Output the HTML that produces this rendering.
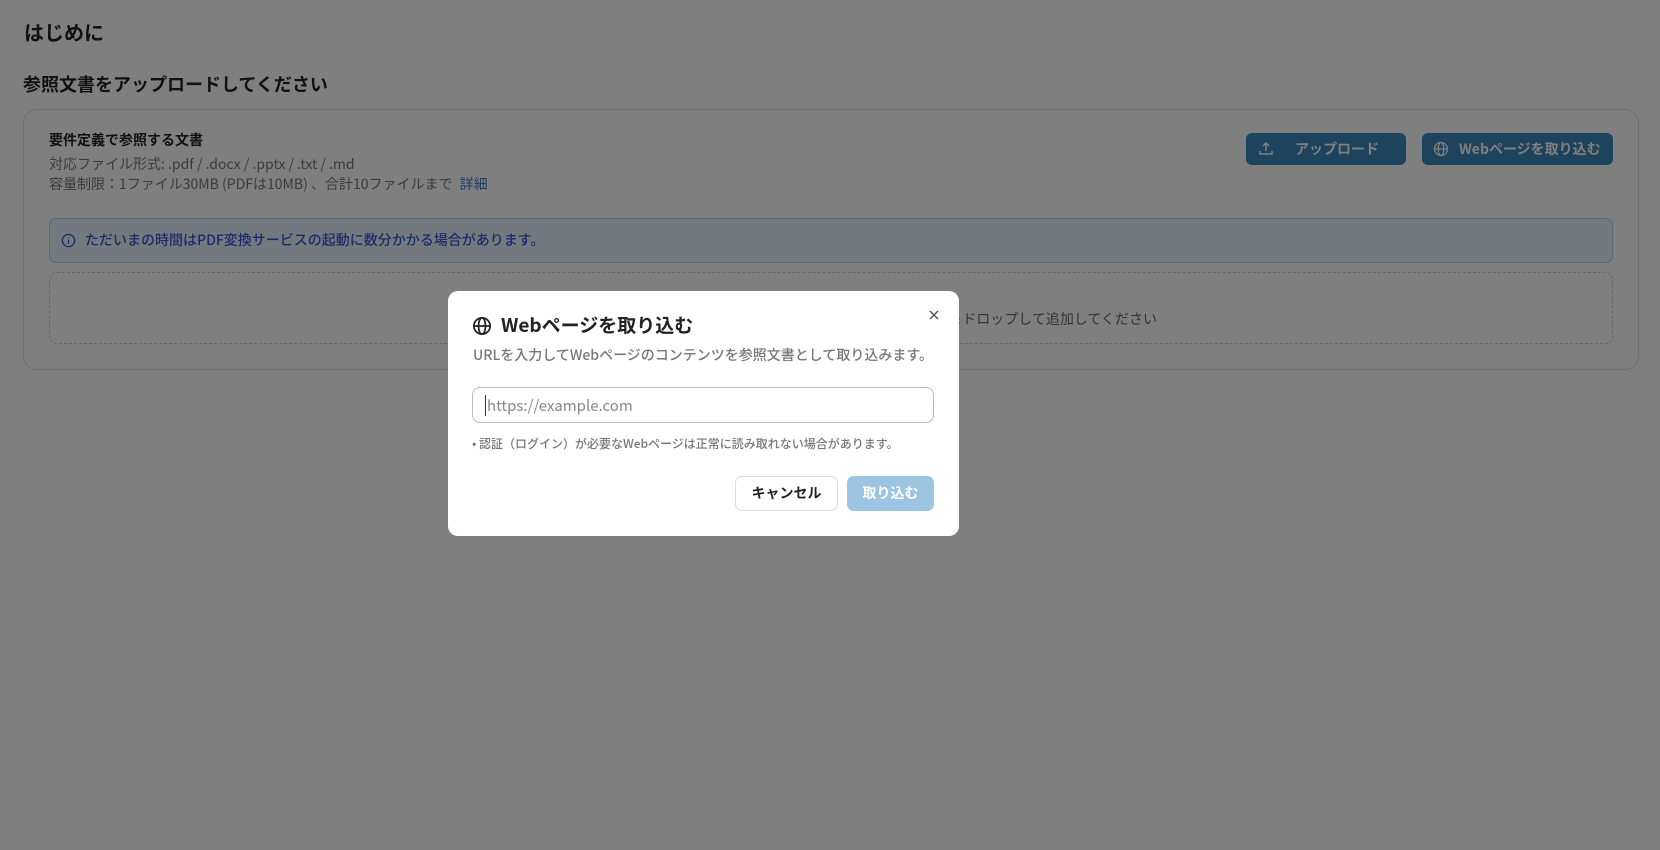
<!DOCTYPE html>
<html><head><meta charset="utf-8"><style>
*{box-sizing:border-box;margin:0;padding:0}
body{width:1660px;height:850px;overflow:hidden;background:#fff;font-family:"Noto Sans CJK JP","Liberation Sans",sans-serif;color:#222;position:relative}
.a{position:absolute;white-space:nowrap;line-height:1.4}
.card{position:absolute;left:23px;top:109px;width:1616px;height:261px;border:1px solid #ddd;border-radius:14px}
.btn{position:absolute;top:133px;height:32px;background:#3a86bb;color:#fff;border-radius:6px;font-size:14px;font-weight:bold;display:flex;align-items:center}
.ov{position:absolute;inset:0;background:rgba(0,0,0,.5)}
.modal{position:absolute;left:448px;top:291px;width:511px;height:245px;background:#fff;border-radius:10px}
</style></head><body>
<div class="a" style="left:24px;top:18px;font-size:20px;font-weight:bold">はじめに</div>
<div class="a" style="left:23px;top:72px;font-size:18px;font-weight:bold">参照文書をアップロードしてください</div>
<div class="card"></div>
<div class="a" style="left:49px;top:131px;font-size:14px;font-weight:bold">要件定義で参照する文書</div>
<div class="a" style="left:49px;top:155px;font-size:14px;color:#777">対応ファイル形式: .pdf / .docx / .pptx / .txt / .md</div>
<div class="a" style="left:49px;top:175px;font-size:14px;color:#777">容量制限：1ファイル30MB (PDFは10MB) 、合計10ファイルまで <span style="color:#3d7cc0;margin-left:4px">詳細</span></div>
<div class="btn" style="left:1246px;width:160px"><svg style="margin-left:12px" width="16" height="16" viewBox="0 0 16 16" fill="none" stroke="#fff" stroke-width="1.5"><path d="M8 10V2M5 5l3-3 3 3M2 10v3h12v-3"/></svg><span style="margin-left:21px">アップロード</span></div>
<div class="btn" style="left:1422px;width:191px"><svg style="margin-left:11px" width="16" height="16" viewBox="0 0 16 16" fill="none" stroke="#fff" stroke-width="1.3"><circle cx="8" cy="8" r="6.5"/><ellipse cx="8" cy="8" rx="2.8" ry="6.5"/><path d="M1.5 8h13"/></svg><span style="margin-left:10px">Webページを取り込む</span></div>
<div style="position:absolute;left:49px;top:218px;width:1564px;height:45px;background:#e9f1fe;border:1px solid #b5cdf5;border-radius:7px"></div>
<svg class="a" style="left:61px;top:233px" width="15" height="15" viewBox="0 0 16 16" fill="none" stroke="#2f5fd0" stroke-width="1.4"><circle cx="8" cy="8" r="6.5"/><path d="M8 7v4.5M8 4.5v.5"/></svg>
<div class="a" style="left:85px;top:231px;font-size:14px;color:#2f5bd0;font-weight:500">ただいまの時間はPDF変換サービスの起動に数分かかる場合があります。</div>
<div style="position:absolute;left:49px;top:272px;width:1564px;height:72px;border:1px dashed #ccc;border-radius:8px"></div>
<div class="a" style="right:503px;top:310px;font-size:14px;color:#666">ファイルをドラッグ＆ドロップして追加してください</div>
<div class="ov"></div>
<div class="modal">
<svg class="a" style="left:24px;top:25px" width="20" height="20" viewBox="0 0 16 16" fill="none" stroke="#222" stroke-width="1.4"><circle cx="8" cy="8" r="6.5"/><ellipse cx="8" cy="8" rx="2.8" ry="6.5"/><path d="M1.5 8h13"/></svg>
<div class="a" style="left:53px;top:21px;font-size:19px;font-weight:bold">Webページを取り込む</div>
<svg class="a" style="left:480px;top:18px" width="12" height="12" viewBox="0 0 12 12" stroke="#555" stroke-width="1.5"><path d="M2 2l8 8M10 2l-8 8"/></svg>
<div class="a" style="left:25px;top:55px;font-size:14px;color:#777;font-weight:500">URLを入力してWebページのコンテンツを参照文書として取り込みます。</div>
<div style="position:absolute;left:24px;top:96px;width:462px;height:36px;border:1.5px solid #bbb;border-radius:8px"></div>
<div class="a" style="left:37px;top:104px;font-size:15px;color:#888;border-left:1px solid #333;padding-left:1px">https://example.com</div>
<div class="a" style="left:24px;top:145px;font-size:12px;color:#777;font-weight:500">• 認証（ログイン）が必要なWebページは正常に読み取れない場合があります。</div>
<div class="a" style="left:287px;top:185px;width:103px;height:35px;border:1px solid #ddd;border-radius:7px;font-size:14px;font-weight:bold;display:flex;align-items:center;justify-content:center">キャンセル</div>
<div class="a" style="left:399px;top:185px;width:87px;height:35px;background:#9cc5e1;color:#fff;border-radius:7px;font-size:14px;font-weight:bold;display:flex;align-items:center;justify-content:center">取り込む</div>
</div>
</body></html>
